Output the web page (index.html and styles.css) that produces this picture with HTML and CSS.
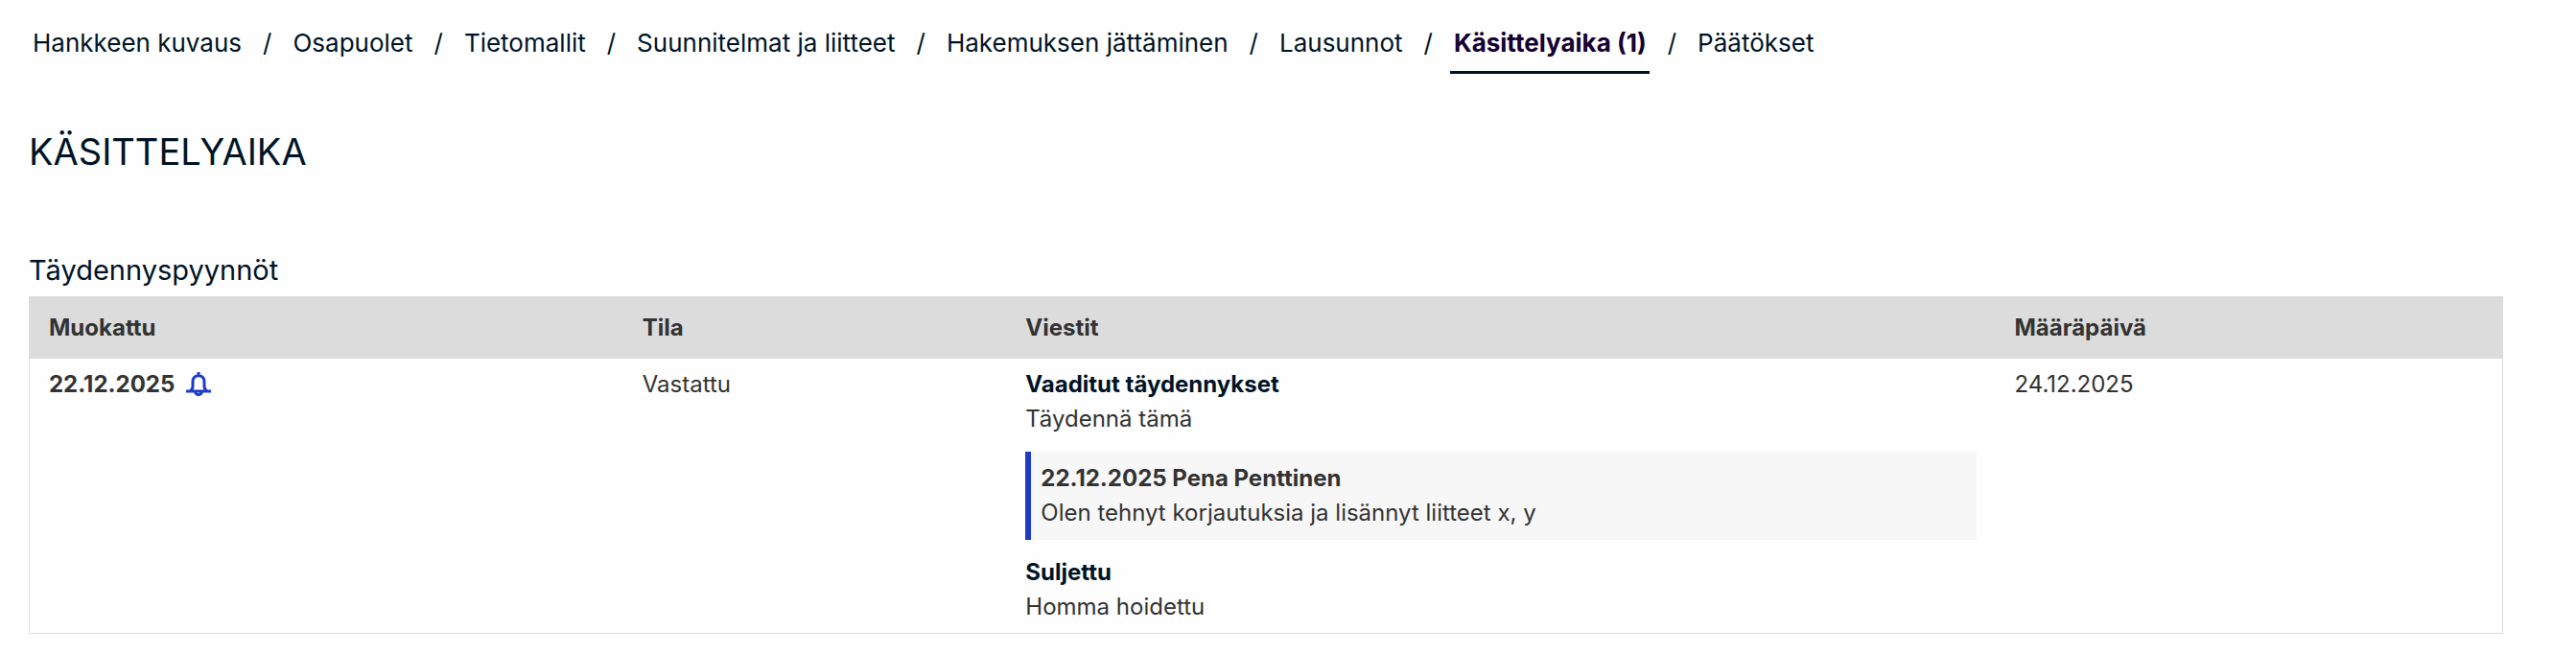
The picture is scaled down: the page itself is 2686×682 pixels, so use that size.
FILE: index.html
```html
<!DOCTYPE html>
<html lang="fi">
<head>
    <meta charset="UTF-8">
    <meta name="viewport" content="width=device-width, initial-scale=1.0">
    <title>Käsittelyaika</title>
    <link rel="stylesheet" href="styles.css">
</head>
<body>
    <nav>
        <ul class="steps">
            <li><a href="#kuvaus">Hankkeen kuvaus</a></li>
            <li><a href="#osapuolet">Osapuolet</a></li>
            <li><a href="#tietomallit">Tietomallit</a></li>
            <li><a href="#suunnitelmat">Suunnitelmat ja liitteet</a></li>
            <li><a href="#hakemus">Hakemuksen jättäminen</a></li>
            <li><a href="#lausunnot">Lausunnot</a></li>
            <li><a href="#kasittelyaika" class="active">Käsittelyaika (1)</a></li>
            <li><a href="#paatokset">Päätökset</a></li>
        </ul>
    </nav>

    <main>
        <h1>KÄSITTELYAIKA</h1>

        <h2 id="requests-title">Täydennyspyynnöt</h2>
        <table class="requests" aria-labelledby="requests-title">
            <thead>
                <tr>
                    <th class="col-modified">Muokattu</th>
                    <th class="col-state">Tila</th>
                    <th class="col-messages">Viestit</th>
                    <th>Määräpäivä</th>
                </tr>
            </thead>
            <tbody>
                <tr>
                    <td>
                        <div class="modified">
                            <strong>22.12.2025</strong>
                            <svg class="bell" viewBox="0 0 26 26" aria-hidden="true">
                                <path d="M13 0v4M7 15V10c0-4 2.500-6.200 6-6.200s6 2.200 6 6.200v5c0 2 1 3.500 2.500 4.500M7 15c0 2-1 3.500-2.500 4.500M0 20h26"/>
                                <path d="M9.500 20.500c.5 2 1.500 3.200 3.500 3.200s3-1.200 3.500-3.200"/>
                            </svg>
                        </div>
                    </td>
                    <td>Vastattu</td>
                    <td>
                        <h3>Vaaditut täydennykset</h3>
                        <p>Täydennä tämä</p>
                        <div class="reply">
                            <strong>22.12.2025 Pena Penttinen</strong>
                            <p>Olen tehnyt korjautuksia ja lisännyt liitteet x, y</p>
                        </div>
                        <h3>Suljettu</h3>
                        <p>Homma hoidettu</p>
                    </td>
                    <td>24.12.2025</td>
                </tr>
            </tbody>
        </table>
    </main>
</body>
</html>
```
FILE: styles.css
```css
* {
    box-sizing: border-box;
}
body {
    margin: 0;
    padding: 21px 76px 0 30px;
    background-color: #fefefe;
    color: #333;
    font-family: Inter, "Liberation Sans", sans-serif;
    font-size: 24px;
    line-height: 36px;
}
h1, h2, h3, p {
    margin: 0;
}

/* Step navigation */
.steps {
    display: flex;
    flex-wrap: wrap;
    margin: 0;
    padding: 0;
    list-style: none;
    color: #001427;
    font-size: 26px;
}
.steps li {
    display: flex;
}
.steps li + li::before {
    content: "/";
    margin: 6px 18px 0 19px;
}
.steps a {
    padding: 6px 3px 11px 4px;
    border-bottom: 3px solid transparent;
    color: #001427;
    text-decoration: none;
}
.steps .active {
    border-bottom-color: #001427;
    color: #140032;
    font-weight: 700;
}

h1 {
    margin-top: 55px;
    color: #001427;
    font-size: 38px;
    font-weight: 400;
    line-height: 52px;
}
h2 {
    margin: 80px 0 9px;
    color: #001427;
    font-size: 29px;
    font-weight: 400;
}
h3 {
    color: #001427;
    font-size: 24px;
    font-weight: 700;
}

/* Requests table */
.requests {
    width: 100%;
    table-layout: fixed;
    border: 1px solid #dcdcdc;
    border-collapse: separate;
    border-spacing: 0;
}
.requests th {
    padding: 14px 19px 14px 20px;
    background-color: #dcdcdc;
    font-weight: 700;
    text-align: left;
}
.requests td {
    padding: 9px 19px 9px 20px;
    vertical-align: top;
}
.col-modified {
    width: 24%;
}
.col-state {
    width: 15.5%;
}
.col-messages {
    width: 40%;
}
.modified {
    display: flex;
    align-items: center;
    gap: 12px;
}
.bell {
    width: 26px;
    height: 26px;
    fill: none;
    stroke: #1e3cc8;
    stroke-width: 3;
}
.reply {
    margin: 16px 0;
    padding: 10px;
    background-color: #f7f7f7;
    border-left: 6px solid #1e3cc8;
}
```
